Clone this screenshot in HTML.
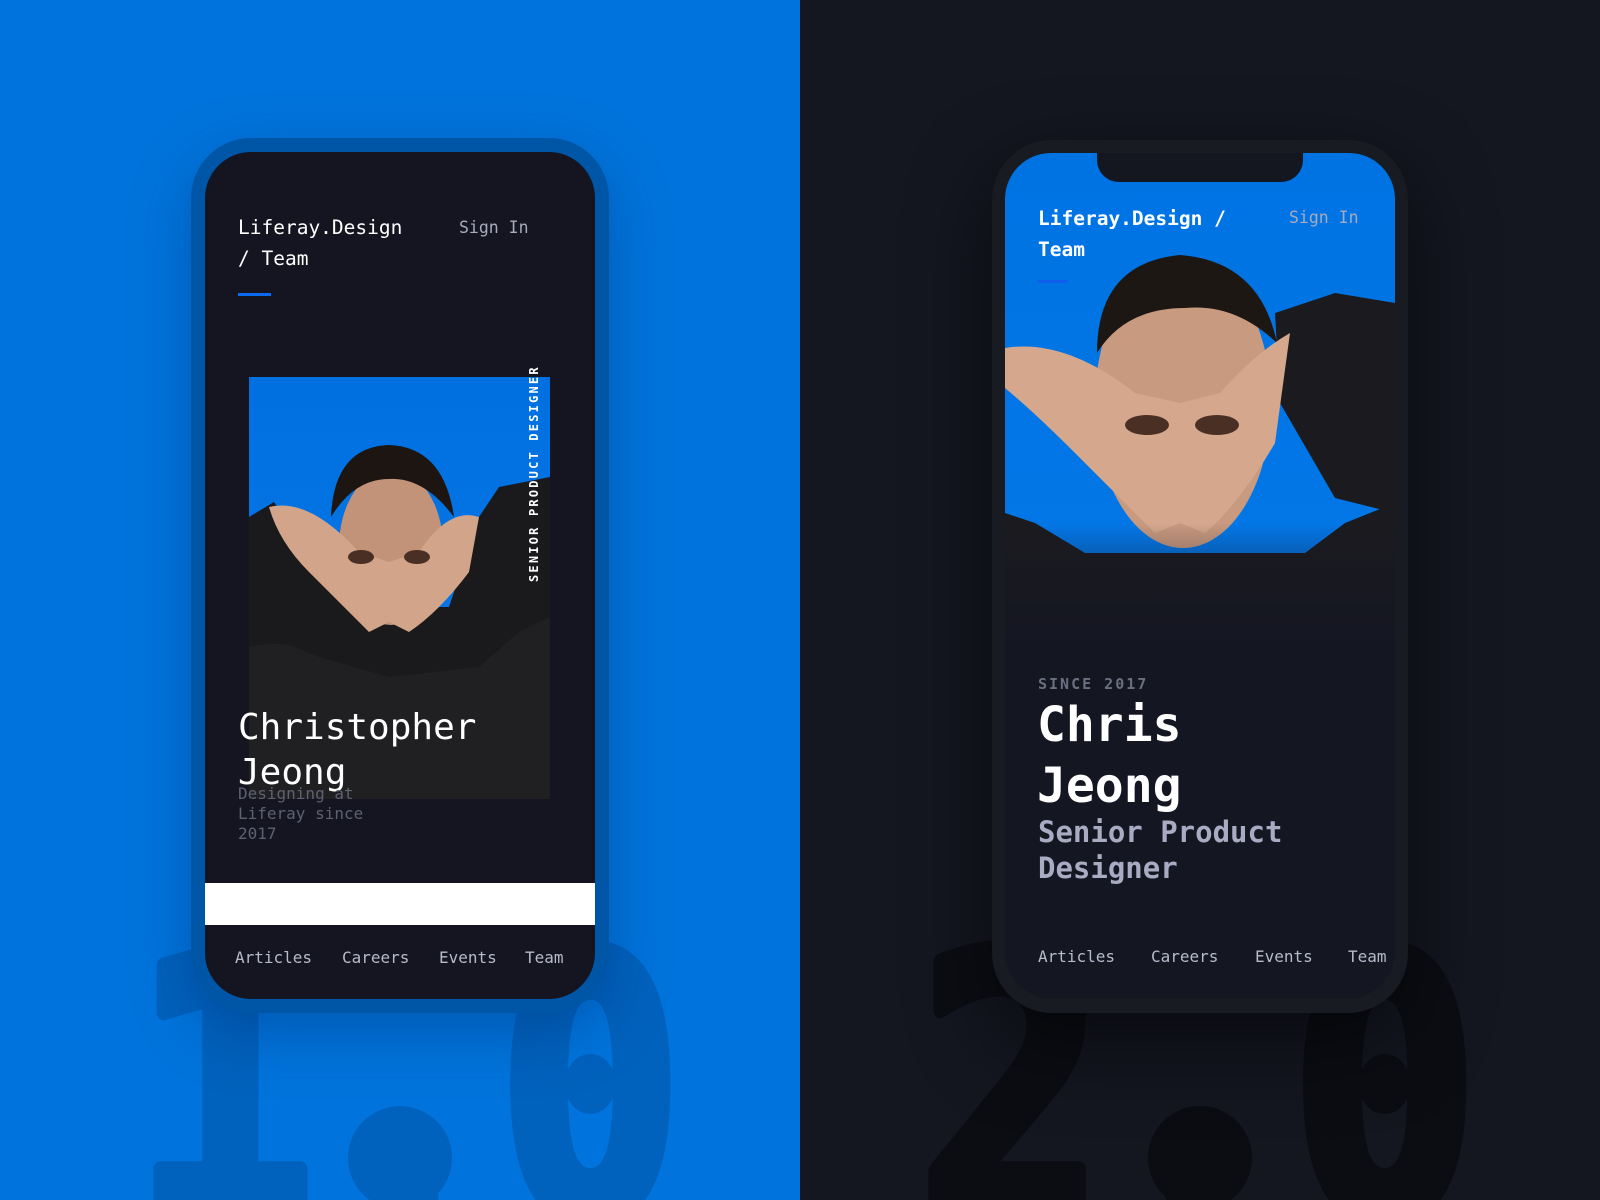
<!DOCTYPE html>
<html><head><meta charset="utf-8"><style>
*{margin:0;padding:0;box-sizing:border-box}
html,body{width:1600px;height:1200px;overflow:hidden}
body{position:relative;font-family:"DejaVu Sans Mono",monospace;background:#141620}
.abs{position:absolute}
.t{position:absolute;white-space:nowrap;font-family:"DejaVu Sans Mono",monospace}
</style></head><body>
<div class="abs" style="left:0;top:0;width:800px;height:1200px;background:#0074dc"></div>
<div class="abs" style="left:800px;top:0;width:800px;height:1200px;background:#141620"></div>
<svg class="abs" style="left:0;top:0" width="1600" height="1200">
<text x="132" y="1215" font-family="DejaVu Sans Mono" font-weight="bold" font-size="360" fill="#0062bd" stroke="#0062bd" stroke-width="16" stroke-linejoin="round" textLength="550" lengthAdjust="spacingAndGlyphs">1.0</text>
<circle cx="400" cy="1158" r="52" fill="#0062bd"/>
<text x="918" y="1215" font-family="DejaVu Sans Mono" font-weight="bold" font-size="360" fill="#0b0d13" stroke="#0b0d13" stroke-width="16" stroke-linejoin="round" textLength="560" lengthAdjust="spacingAndGlyphs">2.0</text>
<circle cx="1200" cy="1158" r="52" fill="#0b0d13"/>
</svg>

<!-- Phone 1 -->
<div class="abs" style="left:191px;top:138px;width:418px;height:875px;border-radius:60px;background:#0056a6;box-shadow:0 20px 60px rgba(0,40,100,.35)"></div>
<div class="abs" style="left:205px;top:152px;width:390px;height:847px;border-radius:46px;background:#141520;overflow:hidden">
  <svg class="abs" style="left:44px;top:225px" width="301" height="422" viewBox="0 0 301 422">
    <defs><linearGradient id="b1" x1="0" y1="0" x2="0" y2="1"><stop offset="0" stop-color="#0070e0"/><stop offset="1" stop-color="#0a78e8"/></linearGradient></defs>
    <rect width="301" height="422" fill="url(#b1)"/>
    <path d="M0 140 L25 125 L60 180 L110 230 L200 230 L230 140 L250 110 L301 100 L301 422 L0 422 Z" fill="#1a1a1c"/>
    <path d="M0 270 Q20 265 40 268 L70 280 L140 300 L230 290 L270 255 L301 240 L301 422 L0 422Z" fill="#202022"/>
    <ellipse cx="142" cy="170" rx="52" ry="78" fill="#c29378"/>
    <path d="M82 140 Q85 70 140 68 Q195 70 205 140 Q175 100 140 102 Q105 102 82 140Z" fill="#1c1512"/>
    <path d="M20 130 Q60 120 110 175 L140 185 L170 175 Q200 130 230 140 L220 195 Q190 235 160 255 L140 245 L120 255 Q90 225 60 195 Q30 165 20 130Z" fill="#d2a58a"/>
    <ellipse cx="112" cy="180" rx="13" ry="7" fill="#4a3024"/>
    <ellipse cx="168" cy="180" rx="13" ry="7" fill="#4a3024"/>
  </svg>
  <div class="t" style="left:33px;top:60px;font-size:19.5px;color:#fff;line-height:31px">Liferay.Design<br>/ Team</div>
  <div class="t" style="left:254px;top:66px;font-size:16.5px;color:#a7abbd">Sign In</div>
  <div class="abs" style="left:33px;top:141px;width:33px;height:3px;background:#0b6bf0"></div>
  <div class="t" style="left:322px;top:198px;width:18px;height:232px;font-size:12px;font-weight:bold;color:#fff;letter-spacing:2.2px;writing-mode:vertical-rl;transform:rotate(180deg)">SENIOR PRODUCT DESIGNER</div>
  <div class="t" style="left:33px;top:553px;font-size:36px;color:#fff;line-height:45px">Christopher<br>Jeong</div>
  <div class="t" style="left:33px;top:632px;font-size:16px;color:#5d6172;line-height:20px">Designing at<br>Liferay since<br>2017</div>
  <div class="abs" style="left:0;top:731px;width:390px;height:42px;background:#fff"></div>
  <div class="t" style="left:30px;top:796px;font-size:16px;color:#b7bacb">Articles</div>
  <div class="t" style="left:137px;top:796px;font-size:16px;color:#b7bacb">Careers</div>
  <div class="t" style="left:234px;top:796px;font-size:16px;color:#b7bacb">Events</div>
  <div class="t" style="left:320px;top:796px;font-size:16px;color:#b7bacb">Team</div>
</div>

<!-- Phone 2 -->
<div class="abs" style="left:992px;top:140px;width:416px;height:873px;border-radius:60px;background:#191b22;box-shadow:0 30px 80px rgba(0,0,0,.5)"></div>
<div class="abs" style="left:1005px;top:153px;width:390px;height:845px;border-radius:46px;background:#141622;overflow:hidden">
  <svg class="abs" style="left:0;top:0" width="390" height="500" viewBox="0 0 390 500">
    <defs>
      <linearGradient id="b2" x1="0" y1="0" x2="0" y2="1"><stop offset="0" stop-color="#0073e3"/><stop offset="1" stop-color="#0478e8"/></linearGradient>
      <linearGradient id="f2" x1="0" y1="0" x2="0" y2="1"><stop offset="0" stop-color="#141622" stop-opacity="0"/><stop offset="1" stop-color="#141622"/></linearGradient>
    </defs>
    <rect width="390" height="500" fill="url(#b2)"/>
    <path d="M0 360 L30 370 L80 400 L300 400 L340 370 L390 350 L390 500 L0 500Z" fill="#1b1b1f"/>
    <path d="M270 160 L330 140 L390 150 L390 360 L330 345 L275 250Z" fill="#1b1b1f"/>
    <ellipse cx="178" cy="250" rx="88" ry="145" fill="#c89a80"/>
    <path d="M92 200 Q92 110 175 102 Q255 108 272 190 Q230 150 180 155 Q120 155 92 200Z" fill="#1d1713"/>
    <path d="M0 195 Q60 185 130 240 L175 250 L215 240 Q250 200 285 180 L270 290 Q235 350 200 380 L175 370 L150 380 Q110 340 70 300 Q30 260 0 235Z" fill="#d5a88e"/>
    <ellipse cx="142" cy="272" rx="22" ry="10" fill="#4a2f24"/>
    <ellipse cx="212" cy="272" rx="22" ry="10" fill="#4a2f24"/>
    <rect y="370" width="390" height="130" fill="url(#f2)"/>
  </svg>
  <div class="abs" style="left:92px;top:-5px;width:206px;height:34px;background:#141620;border-radius:0 0 22px 22px"></div>
  <div class="t" style="left:33px;top:50px;font-size:19.5px;font-weight:bold;color:#fff;line-height:31px">Liferay.Design /<br>Team</div>
  <div class="t" style="left:284px;top:55px;font-size:16.5px;color:#a7abbd">Sign In</div>
  <div class="abs" style="left:33px;top:127px;width:30px;height:3px;background:#1a55f0;opacity:.7"></div>
  <div class="t" style="left:33px;top:522px;font-size:15px;font-weight:bold;letter-spacing:2px;color:#6b6f80">SINCE 2017</div>
  <div class="t" style="left:32px;top:542px;font-size:48px;font-weight:bold;color:#fff;line-height:61px">Chris<br>Jeong</div>
  <div class="t" style="left:33px;top:661px;font-size:29px;font-weight:bold;color:#a8abc2;line-height:36px">Senior Product<br>Designer</div>
  <div class="t" style="left:33px;top:794px;font-size:16px;color:#b7bacb">Articles</div>
  <div class="t" style="left:146px;top:794px;font-size:16px;color:#b7bacb">Careers</div>
  <div class="t" style="left:250px;top:794px;font-size:16px;color:#b7bacb">Events</div>
  <div class="t" style="left:343px;top:794px;font-size:16px;color:#b7bacb">Team</div>
</div>
</body></html>
